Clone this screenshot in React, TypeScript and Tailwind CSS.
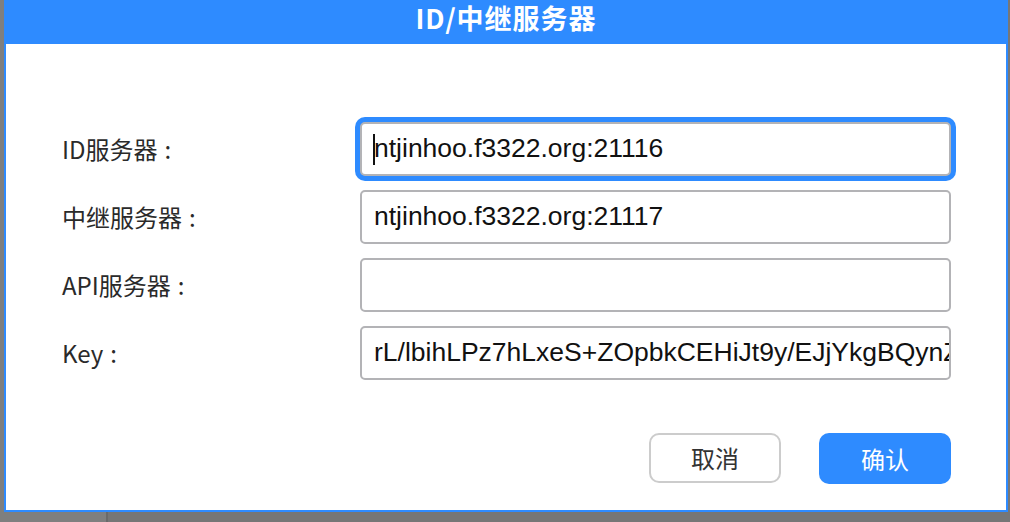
const fields = [
  { label: 'ID服务器', value: 'ntjinhoo.f3322.org:21116', focused: true },
  { label: '中继服务器', value: 'ntjinhoo.f3322.org:21117', focused: false },
  { label: 'API服务器', value: '', focused: false },
  { label: 'Key', value: 'rL/lbihLPz7hLxeS+ZOpbkCEHiJt9y/EJjYkgBQynZkYbV2m0xQ=', focused: false }
]

const cjk = { fontFamily: '"Noto Sans CJK SC", "Noto Sans", sans-serif' }
const latin = { fontFamily: '"Liberation Sans", Arial, sans-serif' }

const App = () => {
  return (
    <div className="flex h-[522px] w-[1010px] flex-col overflow-hidden bg-[#777777]">
      <div className="flex h-[512px]">
        <div className="w-[4px] bg-[#7f7f7f]" />
        <div className="flex w-[1004px] flex-col bg-[#2e8bff]">
          <header className="flex h-[44px] items-start justify-center">
            <h1 className="text-[27px] font-bold leading-[36px] tracking-[1px] text-white" style={cjk}>
              ID/中继服务器
            </h1>
          </header>

          <div className="mx-[2px] mb-[2px] flex flex-1 flex-col bg-white pl-[56px] pr-[55px] pt-[78px]">
            <div className="flex flex-col gap-[14px]">
              {fields.map((field) => (
                <div key={field.label} className="flex items-center">
                  <div className="w-[298px] text-[24px] leading-[30px] text-[#2a2a2a]" style={cjk}>
                    {field.label}
                    <span className="ml-[7px]">:</span>
                  </div>
                  <div
                    className={`relative flex h-[54px] w-[591px] items-center overflow-hidden whitespace-nowrap rounded-[5px] border-2 border-[#b3b3b6] bg-white pl-[12px] text-[26.5px] text-[#111111] ${field.focused ? 'overflow-visible ring-[5px] ring-[#2e8bff]' : ''}`}
                    style={latin}
                  >
                    {field.focused && <span className="absolute left-[11px] top-[10px] h-[31px] w-[2px] bg-[#111111]" />}
                    <span>{field.value}</span>
                  </div>
                </div>
              ))}
            </div>

            <div className="mt-[53px] flex justify-end gap-[38px]">
              <button
                type="button"
                className="h-[50px] w-[132px] rounded-[10px] border-2 border-[#cccccc] bg-white text-[24px] text-[#333333]"
                style={cjk}
              >
                取消
              </button>
              <button
                type="button"
                className="h-[51px] w-[132px] rounded-[10px] bg-[#2e8bff] text-[24px] text-white"
                style={cjk}
              >
                确认
              </button>
            </div>
          </div>
        </div>
        <div className="w-[2px] bg-[#777777]" />
      </div>
      <div className="flex h-[10px]">
        <div className="w-[106px] bg-[#7f7f7f]" />
        <div className="w-[2px] bg-[#6a6a6a]" />
        <div className="flex-1 bg-[#767676]" />
      </div>
    </div>
  )
}

export default App
